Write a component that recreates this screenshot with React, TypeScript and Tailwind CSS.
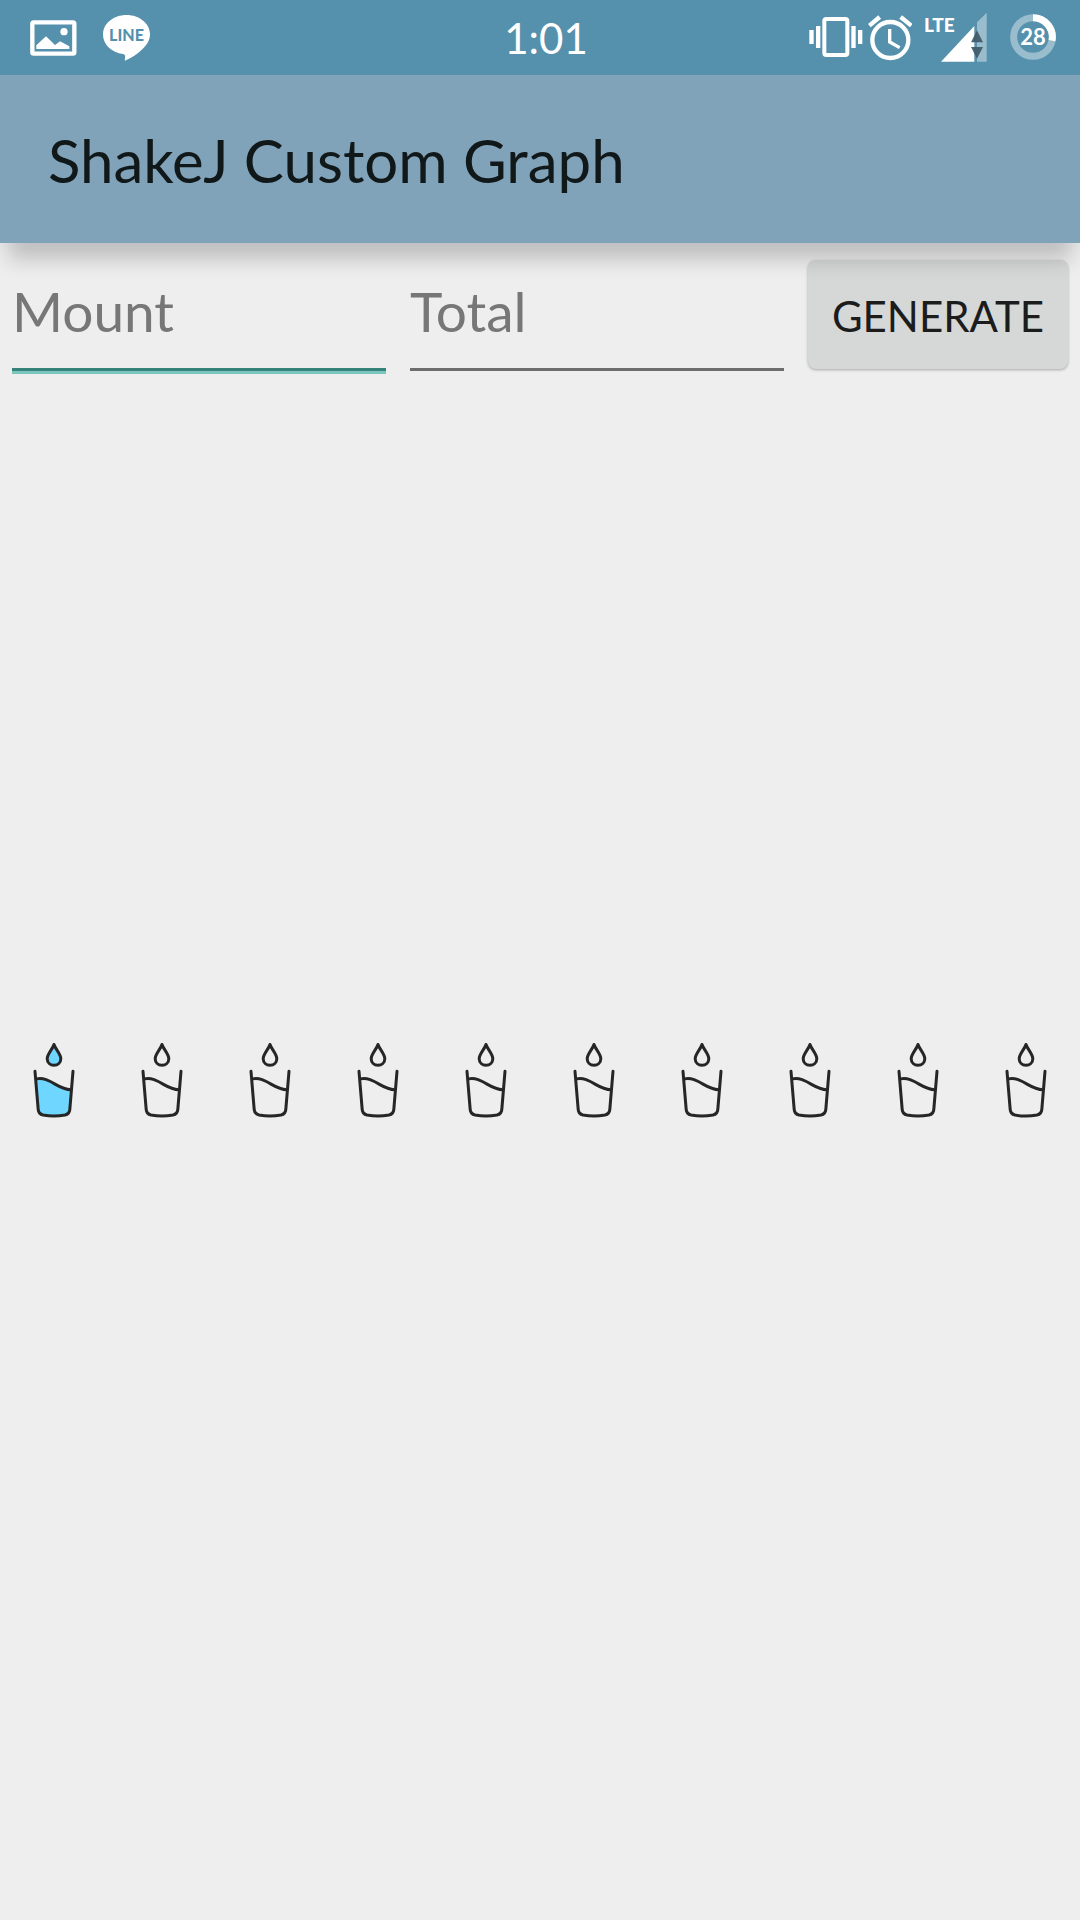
import React from 'react';

const FONT = 'font-[Lato,"Noto_Sans",sans-serif]';

function PictureIcon() {
  return (
    <svg className="h-[36px] w-[47px]" viewBox="0 0 141 108" aria-hidden="true">
      <rect x="7" y="7" width="126" height="94" rx="4" fill="none" stroke="#fff" strokeWidth="13" />
      <path d="M19 87V76L48 49L75 75L90 64L118 79V87Z" fill="#fff" />
      <circle cx="102" cy="35" r="11" fill="#fff" />
    </svg>
  );
}

function LineIcon() {
  return (
    <svg className="h-[46px] w-[47px]" viewBox="0 0 47 46" aria-hidden="true">
      <path
        d="M23.500 0C36.500 0 47 8.500 47 19.500C47 25.500 43.500 30.500 39 34.500C34.500 38.700 28.500 43 22.500 45.600C21.500 46 21.800 44.800 22 43.500C22.300 41.500 22.500 39.500 20 39C8.500 37.500 0 29.500 0 19.500C0 8.500 10.500 0 23.500 0Z"
        fill="#fff"
      />
      <text x="23.500" y="25.500" textAnchor="middle" fontFamily="Lato, sans-serif" fontWeight="900" fontSize="16" fill="#5591ad">
        LINE
      </text>
    </svg>
  );
}

function VibrateIcon() {
  return (
    <svg className="h-[75px] w-[54px]" viewBox="87 0 162 225" aria-hidden="true">
      <rect x="133" y="57" width="69" height="108" rx="6" fill="none" stroke="#fff" strokeWidth="12" />
      <path d="M88 90h13v42h-13zM108 78h13v66h-13zM214 78h13v66h-13zM234 90h13v42h-13z" fill="#fff" />
    </svg>
  );
}

function AlarmIcon() {
  return (
    <svg className="h-[75px] w-[44px]" viewBox="264 0 132 225" aria-hidden="true">
      <g fill="none" stroke="#fff">
        <circle cx="331" cy="120" r="54" strokeWidth="13" />
        <path d="M329 87V126L359 143" strokeWidth="10" />
        <path d="M268 77L299 51M362 51L394 77" strokeWidth="13" />
      </g>
    </svg>
  );
}

function SignalIcon() {
  return (
    <svg className="h-[75px] w-[63px]" viewBox="432 0 189 225" aria-label="LTE signal">
      <path d="M483 185L583 78V185Z" fill="#fff" />
      <path d="M591 185V67L620 38V185Z" fill="#9abdce" />
      <path d="M573 127L591 91L609 127ZM573 141H609L591 176Z" fill="#415d6c" fillOpacity="0.95" />
      <text x="432" y="95" fontFamily="Lato, sans-serif" fontWeight="900" fontSize="57" fill="#fff">
        LTE
      </text>
    </svg>
  );
}

function BatteryIcon() {
  return (
    <svg className="h-[75px] w-[46px]" viewBox="690 0 138 225" aria-label="Battery 28 percent">
      <circle cx="759" cy="111" r="58" fill="none" stroke="#9abdce" strokeWidth="21" />
      <path d="M759 53A58 58 0 0 1 816 122" fill="none" stroke="#fff" strokeWidth="21" />
      <text x="759" y="134" textAnchor="middle" fontFamily="Lato, sans-serif" fontWeight="700" fontSize="66" fill="#fff">
        28
      </text>
    </svg>
  );
}

function Cup({ filled }: { filled: boolean }) {
  const water = filled ? '#6fd6ff' : 'none';
  return (
    <svg className="h-20 w-[60px] max-w-full" viewBox="0 0 60 80" role="img" aria-label={filled ? 'Full cup' : 'Empty cup'}>
      <path
        d="M12.600 38.900C25 36 35 50.500 47.300 49.700L45.800 69.500C45.500 73 44 74.300 41 75C34 76.400 26 76.400 19 75C16 74.300 14.500 73 14.200 69.500Z"
        fill={water}
      />
      <g fill="none" stroke="#262626" strokeWidth="3" strokeLinecap="round" strokeLinejoin="round">
        <path d="M30 4.500C28.700 9 23.200 14 23.200 18.700C23.200 22.600 26.200 25.300 30 25.300C33.800 25.300 36.800 22.600 36.800 18.700C36.800 14 31.300 9 30 4.500Z" fill={water} />
        <path d="M11 31.300L14.200 69.500C14.500 73 16 74.300 19 75C26 76.400 34 76.400 41 75C44 74.300 45.500 73 45.800 69.500L49 31.300" />
        <path d="M12.600 38.900C25 36 35 50.500 47.300 49.700" strokeLinecap="butt" />
      </g>
    </svg>
  );
}

const INPUT =
  'h-[111px] min-w-0 flex-1 rounded-none border-b-[3px] bg-transparent pb-1.5 text-[55px] leading-[66px] text-[#1c1c1c] outline-none placeholder:text-[#777777] placeholder:opacity-100';

export default function App() {
  const cups = Array.from({ length: 10 }, (_, i) => i < 1);
  return (
    <div className={`${FONT} flex min-h-screen flex-col bg-[#eeeeee]`}>
      <div className="grid h-[75px] grid-cols-[1fr_auto_1fr] items-center bg-[#5591ad] pr-6 pl-[30px] text-white">
        <div className="flex items-center gap-[26px]">
          <PictureIcon />
          <LineIcon />
        </div>
        <time className="pl-1.5 text-[42px] leading-[50px]">1:01</time>
        <div className="flex items-center justify-end">
          <VibrateIcon />
          <div className="pr-3 pl-[5px]">
            <AlarmIcon />
          </div>
          <SignalIcon />
          <div className="pl-[23px]">
            <BatteryIcon />
          </div>
        </div>
      </div>
      <header className="relative z-10 flex h-[168px] items-center bg-[#80a3b9] px-12 pt-0.5 shadow-[0_24px_20px_-8px_rgba(0,0,0,0.2)]">
        <h1 className="text-[60px] leading-[72px] text-[#111819]">ShakeJ Custom Graph</h1>
      </header>
      <main className="flex flex-1 flex-col">
        <form className="flex items-start gap-6 px-3 pt-[17px]" onSubmit={(e) => e.preventDefault()}>
          <input
            aria-label="Mount"
            placeholder="Mount"
            className={`${INPUT} border-[#36837c] shadow-[0_3px_0_#7ac5bc]`}
          />
          <input aria-label="Total" placeholder="Total" className={`${INPUT} border-[#6d6d6d]`} />
          <button
            type="submit"
            className="h-[109px] rounded-lg bg-[#d6d8d7] px-6 pt-0.5 text-[42px] leading-[50px] text-[#1c1c1c] shadow-[0_1px_3px_rgba(0,0,0,0.3)]"
          >
            GENERATE
          </button>
        </form>
        <div className="grid flex-1 grid-cols-10 content-center justify-items-center pb-[132px]">
          {cups.map((filled, i) => (
            <Cup key={i} filled={filled} />
          ))}
        </div>
      </main>
    </div>
  );
}
